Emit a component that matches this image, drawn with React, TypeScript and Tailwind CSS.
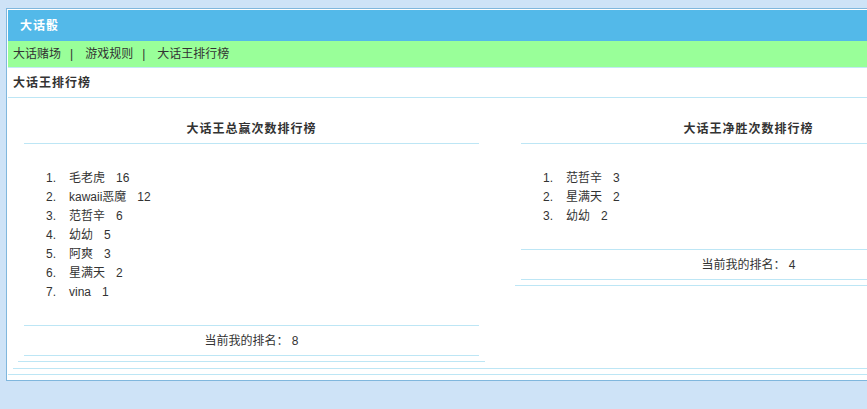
const winTotal = [
  { name: "毛老虎", score: 16 },
  { name: "kawaii恶魔", score: 12 },
  { name: "范哲辛", score: 6 },
  { name: "幼幼", score: 5 },
  { name: "阿爽", score: 3 },
  { name: "星满天", score: 2 },
  { name: "vina", score: 1 },
];

const winNet = [
  { name: "范哲辛", score: 3 },
  { name: "星满天", score: 2 },
  { name: "幼幼", score: 2 },
];

function RankBoard({
  title,
  rows,
  myRank,
}: {
  title: string;
  rows: { name: string; score: number }[];
  myRank: number;
}) {
  return (
    <div className="w-[467px] shrink-0 border-b border-[#bde6f5] px-[6px] pb-[5px]">
      <div className="mt-[22px] border-b border-[#bde6f5] pb-[5px] text-center font-bold leading-[18px] tracking-[1px]">
        {title}
      </div>
      <ol className="mt-[24px] mb-[24px] pl-[22px]">
        {rows.map((r, i) => (
          <li key={i} className="flex h-[19px] items-center">
            <span className="w-[23px]">{i + 1}.</span>
            <span>{r.name}</span>
            <span className="ml-[11px]">{r.score}</span>
          </li>
        ))}
      </ol>
      <div className="flex h-[31px] items-center justify-center border-y border-[#bde6f5]">
        当前我的排名：&nbsp;{myRank}
      </div>
    </div>
  );
}

export default function App() {
  return (
    <div
      className="h-[409px] w-[867px] overflow-hidden bg-[#cee3f7] pt-[8px] pl-[6px] text-[12px] text-[#333]"
      style={{ fontFamily: '"Liberation Sans", "Noto Sans CJK SC", sans-serif' }}
    >
      <div className="w-[1000px] border border-[#80b7dd] bg-white p-px">
        <div className="flex h-[31px] items-center bg-[#53b9e9] pl-[12px] font-bold tracking-[1px] text-white">
          大话骰
        </div>
        <div className="flex h-[27px] items-center border-b border-[#c2eaf5] bg-[#99ff99] pb-px pl-[5px]">
          <span>大话赌场</span>
          <span className="ml-[9px] mr-[12px]">|</span>
          <span>游戏规则</span>
          <span className="ml-[9px] mr-[12px]">|</span>
          <span>大话王排行榜</span>
        </div>
        <div className="flex h-[30px] items-center border-b border-[#bde6f5] pl-[5px] font-bold tracking-[1px]">
          大话王排行榜
        </div>
        <div className="mb-[4px] border-b border-[#bde6f5] pl-[5px] pb-[5px]">
          <div className="border-b border-[#bde6f5] pl-[5px] pb-[6px]">
            <div className="flex items-start gap-[30px]">
              <RankBoard title="大话王总赢次数排行榜" rows={winTotal} myRank={8} />
              <RankBoard title="大话王净胜次数排行榜" rows={winNet} myRank={4} />
            </div>
          </div>
        </div>
      </div>
    </div>
  );
}
